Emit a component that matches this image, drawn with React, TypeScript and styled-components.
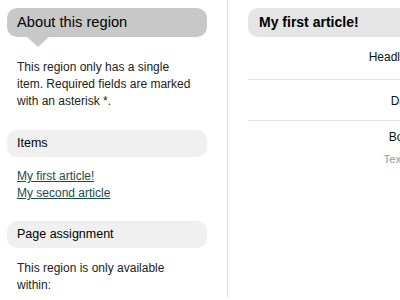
import React from "react";
import styled, { createGlobalStyle } from "styled-components";

const Global = createGlobalStyle`
  html, body { margin: 0; padding: 0; background: #fff; }
  body {
    font-family: "Liberation Sans", Arial, Helvetica, sans-serif;
    font-size: 12px;
    line-height: 17px;
    color: #222;
    overflow: hidden;
  }
`;

const Page = styled.div`
  display: flex;
  align-items: flex-start;
  width: 400px;
  height: 300px;
  overflow: hidden;
`;

const Sidebar = styled.aside`
  flex: 0 0 auto;
  width: 200px;
  padding: 8px 20px 3px 7px;
  border-right: 1px solid #dedede;
`;

const Callout = styled.h2`
  position: relative;
  margin: 0;
  height: 29px;
  padding: 0 10px;
  border-radius: 10px;
  background: #c8c8c8;
  color: #000;
  font-size: 14.7px;
  font-weight: normal;
  line-height: 29px;

  &::after {
    content: "";
    position: absolute;
    left: 20px;
    top: 29px;
    border-left: 11px solid transparent;
    border-right: 11px solid transparent;
    border-top: 10px solid #c8c8c8;
  }
`;

const SectionHead = styled.h3<{ $top: number }>`
  margin: ${(p) => p.$top}px 0 0;
  height: 27px;
  padding: 0 10px;
  border-radius: 10px;
  background: #f0f0f0;
  color: #000;
  font-size: 12.5px;
  font-weight: normal;
  line-height: 27px;
`;

const Text = styled.p<{ $top: number }>`
  margin: ${(p) => p.$top}px 0 0;
  padding: 0 10px;
`;

const LinkList = styled.ul`
  list-style: none;
  margin: 11px 0 0;
  padding: 0 10px;
`;

const ItemLink = styled.a`
  color: #1d4b4a;
  text-decoration: underline;
`;

const Main = styled.main`
  flex: 0 0 auto;
  width: 400px;
  padding: 8px 0 0 20px;
`;

const ArticleTitle = styled.h1`
  margin: 0;
  height: 29px;
  padding: 0 11px;
  border-radius: 10px;
  background: #e5e5e5;
  color: #000;
  font-size: 14px;
  font-weight: bold;
  line-height: 29px;
`;

const Field = styled.div<{ $pt: number; $pb: number; $last?: boolean }>`
  padding: ${(p) => p.$pt}px 0 ${(p) => p.$pb}px;
  border-bottom: ${(p) => (p.$last ? "none" : "1px solid #e2e2e2")};
`;

const Label = styled.label`
  display: block;
  width: 168px;
  text-align: right;
  color: #111;
`;

const Hint = styled.div`
  width: 168px;
  margin-top: 6px;
  text-align: right;
  color: #9a9a9a;
  font-size: 11.5px;
  line-height: 14px;
`;

export default function App() {
  return (
    <>
      <Global />
      <Page>
        <Sidebar>
          <Callout>About this region</Callout>
          <Text $top={22}>
            This region only has a single item. Required fields are marked
            with an asterisk *.
          </Text>
          <SectionHead $top={20}>Items</SectionHead>
          <LinkList>
            <li>
              <ItemLink href="#">My first article!</ItemLink>
            </li>
            <li>
              <ItemLink href="#">My second article</ItemLink>
            </li>
          </LinkList>
          <SectionHead $top={19}>Page assignment</SectionHead>
          <Text $top={12}>This region is only available within:</Text>
        </Sidebar>
        <Main>
          <ArticleTitle>My first article!</ArticleTitle>
          <Field $pt={12} $pb={13}>
            <Label>Headline</Label>
          </Field>
          <Field $pt={13} $pb={10}>
            <Label>Date</Label>
          </Field>
          <Field $pt={8} $pb={10} $last>
            <Label>Body</Label>
            <Hint>Textile</Hint>
          </Field>
        </Main>
      </Page>
    </>
  );
}
